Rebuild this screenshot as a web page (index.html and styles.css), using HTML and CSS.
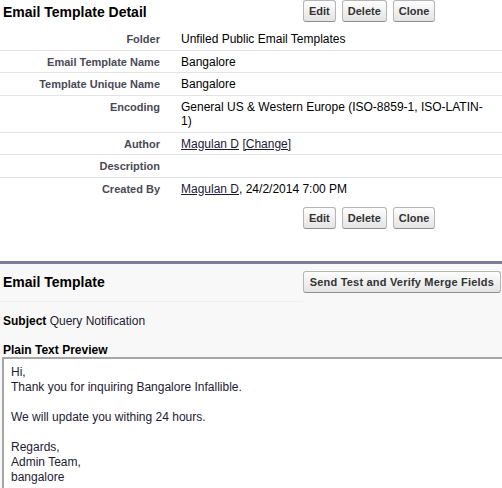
FILE: index.html
```html
<!DOCTYPE html>
<html>

<head>
  <meta charset="UTF-8">
  <title>Email Template Detail</title>
  <link rel="stylesheet" href="styles.css">
</head>

<body>

  <div class="detail">
    <div class="pb-header">
      <h2 class="pb-title">Email Template Detail</h2>
      <div class="btn-row">
        <button class="btn">Edit</button>
        <button class="btn">Delete</button>
        <button class="btn">Clone</button>
      </div>
    </div>

    <table class="detail-list">
      <tr>
        <th>Folder</th>
        <td>Unfiled Public Email Templates</td>
      </tr>
      <tr>
        <th>Email Template Name</th>
        <td>Bangalore</td>
      </tr>
      <tr>
        <th>Template Unique Name</th>
        <td>Bangalore</td>
      </tr>
      <tr>
        <th>Encoding</th>
        <td>General US &amp; Western Europe (ISO-8859-1, ISO-LATIN-1)</td>
      </tr>
      <tr>
        <th>Author</th>
        <td><a href="#">Magulan D</a> <a href="#">[Change]</a></td>
      </tr>
      <tr>
        <th>Description</th>
        <td></td>
      </tr>
      <tr>
        <th>Created By</th>
        <td><a href="#">Magulan D</a>, 24/2/2014 7:00 PM</td>
      </tr>
    </table>

    <div class="pb-footer">
      <div class="btn-row">
        <button class="btn">Edit</button>
        <button class="btn">Delete</button>
        <button class="btn">Clone</button>
      </div>
    </div>
  </div>

  <div class="template">
    <div class="tpl-header">
      <h2 class="tpl-title">Email Template</h2>
      <button class="btn btn-send">Send Test and Verify Merge Fields</button>
    </div>

    <div class="subject"><b>Subject</b> Query Notification</div>

    <div class="preview-label">Plain Text Preview</div>
    <div class="preview">
      Hi,<br>
      Thank you for inquiring Bangalore Infallible.<br>
      <br>
      We will update you withing 24 hours.<br>
      <br>
      Regards,<br>
      Admin Team,<br>
      bangalore
    </div>
  </div>

</body>

</html>
```

FILE: styles.css
```css
html {
  background: #fff;
}

body {
  margin: 0;
  font-family: "Liberation Sans", Arial, sans-serif;
  font-size: 12px;
  color: #000;
  overflow: hidden;
}

/* top block */
.pb-header {
  display: flex;
  align-items: flex-start;
  height: 28px;
}

.pb-title {
  margin: 0;
  width: 303px;
  padding: 5px 0 0 3px;
  box-sizing: border-box;
  font-size: 14px;
  line-height: 14px;
  font-weight: bold;
}

.btn-row {
  display: flex;
  gap: 6px;
}

.btn {
  flex-shrink: 0;
  height: 22px;
  padding: 0 5px;
  font-family: "Liberation Sans", Arial, sans-serif;
  font-size: 11px;
  font-weight: bold;
  line-height: 20px;
  white-space: nowrap;
  color: #333;
  border: 1px solid #b5b5b5;
  border-bottom-color: #8f8f8f;
  border-radius: 3px;
  background: linear-gradient(#fdfdfd, #e4e4e4);
}

.detail-list {
  width: 100%;
  border-collapse: collapse;
  table-layout: fixed;
}

.detail-list tr {
  border-bottom: 1px solid #e3e3e3;
}

.detail-list tr:last-child {
  border-bottom: 0;
}

.detail-list th {
  width: 171px;
  box-sizing: border-box;
  padding: 4px 11px 3px 0;
  text-align: right;
  vertical-align: top;
  font-size: 11px;
  line-height: 14.5px;
  font-weight: bold;
  color: #4a4a56;
}

.detail-list td {
  padding: 4px 10px 3px 10px;
  vertical-align: top;
  line-height: 14.5px;
}

.detail-list a {
  color: #1d1a38;
  text-decoration: underline;
}

.pb-footer {
  padding: 8px 0 0 303px;
}

/* email template block */
.template {
  margin-top: 32px;
  border-top: 3px solid #7b7d99;
  background: #f8f8f8;
  color: #1e1a33;
}

.tpl-header {
  display: flex;
  align-items: flex-start;
}

.tpl-title {
  flex: 0 1 308px;
  margin: 0;
  height: 38px;
  box-sizing: border-box;
  padding: 11px 0 0 3px;
  border-bottom: 1px solid #efefef;
  font-size: 14px;
  line-height: 14px;
  font-weight: bold;
  color: #000;
}

.btn-send {
  margin: 7px 1px 0 auto;
  padding: 0 6px;
  letter-spacing: 0.2px;
}

.subject {
  padding: 12px 3px 0;
  line-height: 15px;
}

.subject b {
  color: #000;
}

.preview-label {
  margin-top: 15px;
  padding-left: 3px;
  line-height: 13px;
  font-weight: bold;
  color: #000;
}

.preview {
  margin-left: 2px;
  padding: 6px 7px 20px;
  border: 2px solid #a6a6a6;
  border-right: 0;
  background: #fff;
  line-height: 15px;
}
```
